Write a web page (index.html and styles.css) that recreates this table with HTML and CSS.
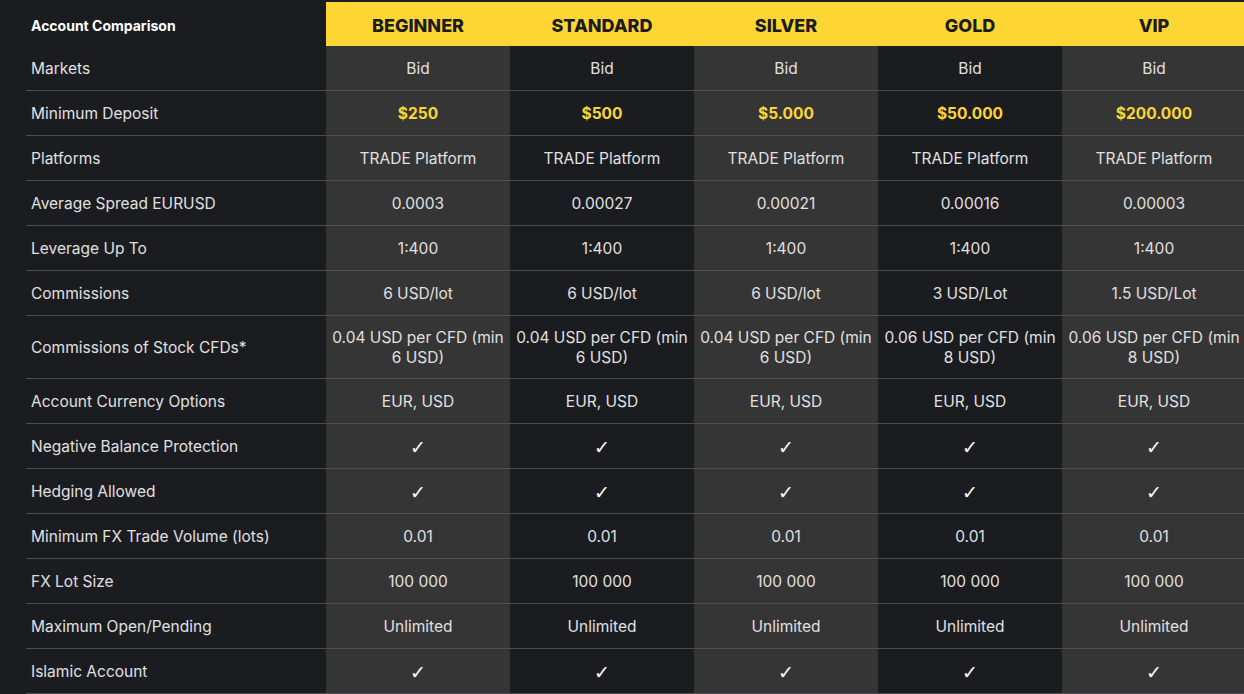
FILE: index.html
```html
<!DOCTYPE html>
<html lang="en">
    <head>
        <meta charset="UTF-8">
        <meta name="viewport" content="width=device-width, initial-scale=1.0">
        <title>Account Comparison</title>
        <link rel="stylesheet" href="styles.css">
    </head>
    <body>
        <div class="compare">
            <div class="row head">
                <div class="label">Account Comparison</div>
                <div class="cell">BEGINNER</div>
                <div class="cell">STANDARD</div>
                <div class="cell">SILVER</div>
                <div class="cell">GOLD</div>
                <div class="cell">VIP</div>
            </div>
            <div class="row">
                <div class="label">Markets</div>
                <div class="cell">Bid</div>
                <div class="cell">Bid</div>
                <div class="cell">Bid</div>
                <div class="cell">Bid</div>
                <div class="cell">Bid</div>
            </div>
            <div class="row price">
                <div class="label">Minimum Deposit</div>
                <div class="cell">$250</div>
                <div class="cell">$500</div>
                <div class="cell">$5.000</div>
                <div class="cell">$50.000</div>
                <div class="cell">$200.000</div>
            </div>
            <div class="row">
                <div class="label">Platforms</div>
                <div class="cell">TRADE Platform</div>
                <div class="cell">TRADE Platform</div>
                <div class="cell">TRADE Platform</div>
                <div class="cell">TRADE Platform</div>
                <div class="cell">TRADE Platform</div>
            </div>
            <div class="row">
                <div class="label">Average Spread EURUSD</div>
                <div class="cell">0.0003</div>
                <div class="cell">0.00027</div>
                <div class="cell">0.00021</div>
                <div class="cell">0.00016</div>
                <div class="cell">0.00003</div>
            </div>
            <div class="row">
                <div class="label">Leverage Up To</div>
                <div class="cell">1:400</div>
                <div class="cell">1:400</div>
                <div class="cell">1:400</div>
                <div class="cell">1:400</div>
                <div class="cell">1:400</div>
            </div>
            <div class="row">
                <div class="label">Commissions</div>
                <div class="cell">6 USD/lot</div>
                <div class="cell">6 USD/lot</div>
                <div class="cell">6 USD/lot</div>
                <div class="cell">3 USD/Lot</div>
                <div class="cell">1.5 USD/Lot</div>
            </div>
            <div class="row">
                <div class="label">Commissions of Stock CFDs*</div>
                <div class="cell">0.04 USD per CFD (min 6 USD)</div>
                <div class="cell">0.04 USD per CFD (min 6 USD)</div>
                <div class="cell">0.04 USD per CFD (min 6 USD)</div>
                <div class="cell">0.06 USD per CFD (min 8 USD)</div>
                <div class="cell">0.06 USD per CFD (min 8 USD)</div>
            </div>
            <div class="row">
                <div class="label">Account Currency Options</div>
                <div class="cell">EUR, USD</div>
                <div class="cell">EUR, USD</div>
                <div class="cell">EUR, USD</div>
                <div class="cell">EUR, USD</div>
                <div class="cell">EUR, USD</div>
            </div>
            <div class="row">
                <div class="label">Negative Balance Protection</div>
                <div class="cell check">✓</div>
                <div class="cell check">✓</div>
                <div class="cell check">✓</div>
                <div class="cell check">✓</div>
                <div class="cell check">✓</div>
            </div>
            <div class="row">
                <div class="label">Hedging Allowed</div>
                <div class="cell check">✓</div>
                <div class="cell check">✓</div>
                <div class="cell check">✓</div>
                <div class="cell check">✓</div>
                <div class="cell check">✓</div>
            </div>
            <div class="row">
                <div class="label">Minimum FX Trade Volume (lots)</div>
                <div class="cell">0.01</div>
                <div class="cell">0.01</div>
                <div class="cell">0.01</div>
                <div class="cell">0.01</div>
                <div class="cell">0.01</div>
            </div>
            <div class="row">
                <div class="label">FX Lot Size</div>
                <div class="cell">100 000</div>
                <div class="cell">100 000</div>
                <div class="cell">100 000</div>
                <div class="cell">100 000</div>
                <div class="cell">100 000</div>
            </div>
            <div class="row">
                <div class="label">Maximum Open/Pending</div>
                <div class="cell">Unlimited</div>
                <div class="cell">Unlimited</div>
                <div class="cell">Unlimited</div>
                <div class="cell">Unlimited</div>
                <div class="cell">Unlimited</div>
            </div>
            <div class="row">
                <div class="label">Islamic Account</div>
                <div class="cell check">✓</div>
                <div class="cell check">✓</div>
                <div class="cell check">✓</div>
                <div class="cell check">✓</div>
                <div class="cell check">✓</div>
            </div>
        </div>
    </body>
</html>
```

FILE: styles.css
```css
html, body {
    overflow: hidden;
}
body {
    background: #1b1c20;
    color: #e0e0e0;
    font-family: Inter, "Noto Sans", sans-serif;
    font-size: 15.5px;
    margin: 0;
    padding: 2px 0 0 26px;
}
.compare {
    width: 1220px;
}
.row {
    border-bottom: 1px solid #4e4e50;
    display: grid;
    grid-template-columns: 300px repeat(5, 184px);
}
.label, .cell {
    align-items: center;
    box-sizing: border-box;
    display: flex;
    line-height: 20px;
    min-height: 44px;
    padding: 12px 5px 10px;
}
.cell {
    justify-content: center;
    text-align: center;
}
.cell:nth-child(2),
.cell:nth-child(4),
.cell:nth-child(6) {
    background: #353535;
}
.head {
    border-bottom: 0;
}
.head .label,
.head .cell {
    padding-top: 13px;
    padding-bottom: 9px;
}
.head .label {
    color: white;
    font-size: 14px;
    font-weight: bold;
}
.head .cell,
.head .cell:nth-child(2),
.head .cell:nth-child(4),
.head .cell:nth-child(6) {
    background: #fdd633;
    color: #1c1c1e;
    font-size: 18px;
    font-weight: 800;
}
.price .cell {
    color: #fcd535;
    font-weight: bold;
}
.check {
    color: white;
    font-family: "DejaVu Sans", sans-serif;
    font-size: 19px;
    font-weight: bold;
}
```
